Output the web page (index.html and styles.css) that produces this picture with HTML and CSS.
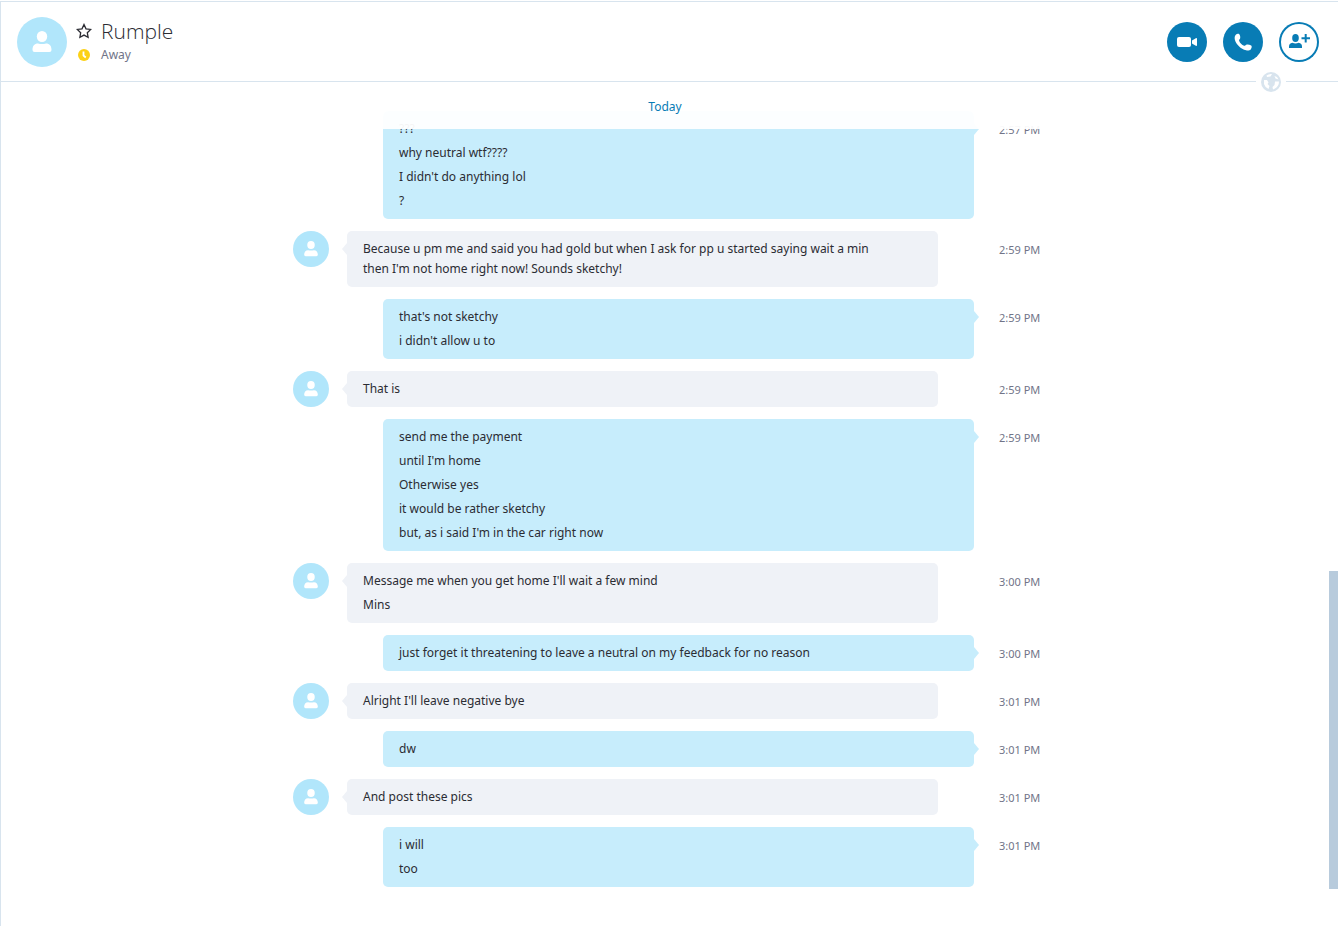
FILE: index.html
```html
<!DOCTYPE html>
<html lang="en">
<head>
    <meta charset="utf-8">
    <meta name="viewport" content="width=device-width, initial-scale=1.0">
    <title>Rumple</title>
    <link rel="stylesheet" href="styles.css">
</head>
<body>
    <svg class="defs" aria-hidden="true">
        <symbol id="person" viewBox="0 0 50 50">
            <ellipse cx="25" cy="19.500" rx="5.200" ry="5.600"/>
            <path d="M15.500 33C15.500 29 17.500 26.600 21 26.600Q25 27.600 29 26.600C32.500 26.600 34.500 29 34.500 33Q34.500 35 32.500 35H17.500Q15.500 35 15.500 33Z"/>
        </symbol>
    </svg>
    <div class="app">
        <header class="header">
            <div class="avatar avatar-big"><svg><use href="#person"/></svg></div>
            <div class="contact">
                <button class="star" aria-label="Favourite">
                    <svg viewBox="0 0 16 16"><path d="M8 1.500l2 4.300 4.700.6-3.400 3.300.8 4.600L8 12.100l-4.100 2.200.8-4.600L1.300 6.400 6 5.800z"/></svg>
                </button>
                <h1>Rumple</h1>
                <svg class="clock" viewBox="0 0 12 12"><circle cx="6" cy="6" r="6"/><path d="M5.500 2.500v4l2.300 2"/></svg>
                <p class="status">Away</p>
            </div>
            <div class="actions">
                <button class="round" aria-label="Video call">
                    <svg viewBox="0 0 40 40"><rect x="10" y="15" width="14" height="10" rx="2"/><path d="M25 18.500l3.800-2.300q1.200-.5 1.200.7v6.200q0 1.200-1.200.7l-3.800-2.300z"/></svg>
                </button>
                <button class="round" aria-label="Call">
                    <svg viewBox="0 0 40 40"><path d="M12.800 12.800c1-1 2.600-1.300 3.500-.5.900 1.300 1.200 2.900.8 4.200-.3.800-1.200 1.300-1 2.200.9 2.300 2.700 4.200 5 5.100.9.200 1.400-.9 2.200-1.100 1.500-.3 3.400 0 4.900.9.900.8.600 2.700-.5 3.800-1 1.100-2.900 1.300-4.600.9-5.300-1.400-9.900-5.700-11.300-10.900-.3-1.700-.1-3.500 1-4.600z"/></svg>
                </button>
                <button class="round round-outline" aria-label="Add people">
                    <svg viewBox="0 0 40 40"><ellipse cx="16.500" cy="16" rx="3.300" ry="3.900"/><path d="M10 26v-1.500q0-3.300 3.400-3.800 3.100 1.500 6.200 0 3.400.5 3.400 3.800V26zM25.700 12h2v3.200H31v2h-3.300v3.300h-2v-3.300h-3.200v-2h3.200z"/></svg>
                </button>
            </div>
            <div class="globe">
                <svg viewBox="0 0 20 20"><circle cx="10" cy="10" r="10"/><path d="M5.500 3.500Q8 1.600 11 2L9.500 4.500 6 5zM3 8L6 8 7.500 10.500 6.500 12 8.500 14 7.500 17Q4 15.500 3 12zM13.500 4L16 5 17.500 7.500 14.500 6.500zM14 9.500L18 9.500Q18 14 14 16.500L12 17.500 11.500 15 13.500 13z"/></svg>
            </div>
        </header>
        <main class="chat">
            <p class="day">Today</p>
            <div class="scroll">
                <div class="messages">
                    <section class="row me">
                        <div class="bubble">
                            <p>???</p>
                            <p>why neutral wtf????</p>
                            <p>I didn't do anything lol</p>
                            <p>?</p>
                        </div>
                        <time>2:57 PM</time>
                    </section>
                    <section class="row them">
                        <div class="avatar"><svg><use href="#person"/></svg></div>
                        <div class="bubble">
                            <p>Because u pm me and said you had gold but when I ask for pp u started saying wait a min then I'm not home right now! Sounds sketchy!</p>
                        </div>
                        <time>2:59 PM</time>
                    </section>
                    <section class="row me">
                        <div class="bubble">
                            <p>that's not sketchy</p>
                            <p>i didn't allow u to</p>
                        </div>
                        <time>2:59 PM</time>
                    </section>
                    <section class="row them">
                        <div class="avatar"><svg><use href="#person"/></svg></div>
                        <div class="bubble">
                            <p>That is</p>
                        </div>
                        <time>2:59 PM</time>
                    </section>
                    <section class="row me">
                        <div class="bubble">
                            <p>send me the payment</p>
                            <p>until I'm home</p>
                            <p>Otherwise yes</p>
                            <p>it would be rather sketchy</p>
                            <p>but, as i said I'm in the car right now</p>
                        </div>
                        <time>2:59 PM</time>
                    </section>
                    <section class="row them">
                        <div class="avatar"><svg><use href="#person"/></svg></div>
                        <div class="bubble">
                            <p>Message me when you get home I'll wait a few mind</p>
                            <p>Mins</p>
                        </div>
                        <time>3:00 PM</time>
                    </section>
                    <section class="row me">
                        <div class="bubble">
                            <p>just forget it threatening to leave a neutral on my feedback for no reason</p>
                        </div>
                        <time>3:00 PM</time>
                    </section>
                    <section class="row them">
                        <div class="avatar"><svg><use href="#person"/></svg></div>
                        <div class="bubble">
                            <p>Alright I'll leave negative bye</p>
                        </div>
                        <time>3:01 PM</time>
                    </section>
                    <section class="row me">
                        <div class="bubble">
                            <p>dw</p>
                        </div>
                        <time>3:01 PM</time>
                    </section>
                    <section class="row them">
                        <div class="avatar"><svg><use href="#person"/></svg></div>
                        <div class="bubble">
                            <p>And post these pics</p>
                        </div>
                        <time>3:01 PM</time>
                    </section>
                    <section class="row me">
                        <div class="bubble">
                            <p>i will</p>
                            <p>too</p>
                        </div>
                        <time>3:01 PM</time>
                    </section>
                </div>
            </div>
            <div class="track"><div class="thumb"></div></div>
        </main>
    </div>
</body>
</html>
```
FILE: styles.css
```css
*{
    box-sizing: border-box;
}
body{
    margin: 0;
    background-color: white;
    color: #2b2c33;
    font-family: "Noto Sans", "Open Sans", sans-serif;
    font-size: 12px;
    line-height: 20px;
}
h1, p{
    margin: 0;
}
svg{
    display: block;
}
button{
    padding: 0;
    border: none;
    background: none;
}
.defs{
    position: absolute;
    width: 0;
    height: 0;
}
.app{
    display: flex;
    flex-direction: column;
    height: 100vh;
    padding-top: 1px;
    overflow: hidden;
}

/* header */
.header{
    position: relative;
    display: flex;
    align-items: center;
    height: 81px;
    padding: 0 19px 0 16px;
    border: 1px solid #d8e4ee;
    border-right: none;
}
.avatar{
    flex: none;
    width: 36px;
    height: 36px;
    border-radius: 50%;
    background-color: #b1e6fb;
    fill: white;
}
.avatar svg{
    width: 100%;
    height: 100%;
}
.avatar-big{
    width: 50px;
    height: 50px;
}
.contact{
    display: grid;
    grid-template-columns: 14px auto;
    column-gap: 10px;
    align-items: center;
    justify-items: center;
    margin: 0 0 2px 10px;
}
.star svg{
    width: 16px;
    height: 16px;
    fill: none;
    stroke: #2b2c33;
    stroke-width: 1.3;
}
.contact h1{
    justify-self: start;
    font-family: "Open Sans", "Noto Sans", sans-serif;
    font-size: 21px;
    font-weight: 300;
    line-height: 28px;
}
.clock{
    width: 12px;
    height: 12px;
    fill: #fcd116;
}
.clock path{
    fill: none;
    stroke: white;
    stroke-width: 1.8;
}
.status{
    justify-self: start;
    color: #717488;
}
.actions{
    display: flex;
    gap: 16px;
    margin-left: auto;
}
.round{
    width: 40px;
    height: 40px;
    border-radius: 50%;
    background-color: #087cb5;
    fill: white;
}
.round-outline{
    background-color: white;
    box-shadow: inset 0 0 0 2px #087cb5;
    fill: #087cb5;
}
.globe{
    position: absolute;
    right: 52px;
    bottom: -11px;
    z-index: 2;
    padding: 0 5px;
    background-color: white;
}
.globe svg{
    width: 20px;
    height: 20px;
    fill: #d8e4ee;
}
.globe path{
    fill: white;
}

/* conversation */
.chat{
    position: relative;
    display: flex;
    flex: 1;
    min-height: 0;
    border-left: 1px solid #d8e4ee;
}
.day{
    position: absolute;
    top: 0;
    left: 0;
    right: 9px;
    z-index: 1;
    height: 47px;
    padding-top: 15px;
    background-color: rgba(255, 255, 255, 0.95);
    color: #087cb5;
    text-align: center;
}
.scroll{
    display: flex;
    flex: 1;
    flex-direction: column;
    justify-content: flex-end;
    min-width: 0;
    overflow: hidden;
}
.messages{
    display: flex;
    flex-direction: column;
    gap: 12px;
    width: 100%;
    max-width: 748px;
    margin: 0 auto;
    padding: 0 2px 39px;
}
.row{
    display: flex;
    align-items: flex-start;
}
.bubble{
    position: relative;
    flex: 1;
    min-width: 0;
    padding: 6px 48px 6px 16px;
    border-radius: 5px;
}
.bubble p{
    padding: 2px 0;
}
.bubble::after{
    content: "";
    position: absolute;
    top: 12px;
    border: 6px solid transparent;
}
.me .bubble{
    margin-left: 90px;
    background-color: #c7edfc;
}
.me .bubble::after{
    left: 100%;
    border-left: 5px solid #c7edfc;
    border-right: none;
}
.them .bubble{
    margin: 0 36px 0 18px;
    background-color: #eff2f7;
}
.them .bubble::after{
    right: 100%;
    border-right: 5px solid #eff2f7;
    border-left: none;
}
time{
    flex: none;
    width: 63px;
    padding: 9px 0 0 25px;
    color: #717488;
    font-size: 11px;
    white-space: nowrap;
}
.track{
    display: flex;
    flex-direction: column;
    justify-content: flex-end;
    width: 9px;
    padding-bottom: 37px;
}
.thumb{
    height: 318px;
    background-color: #b8cbdc;
}
```
